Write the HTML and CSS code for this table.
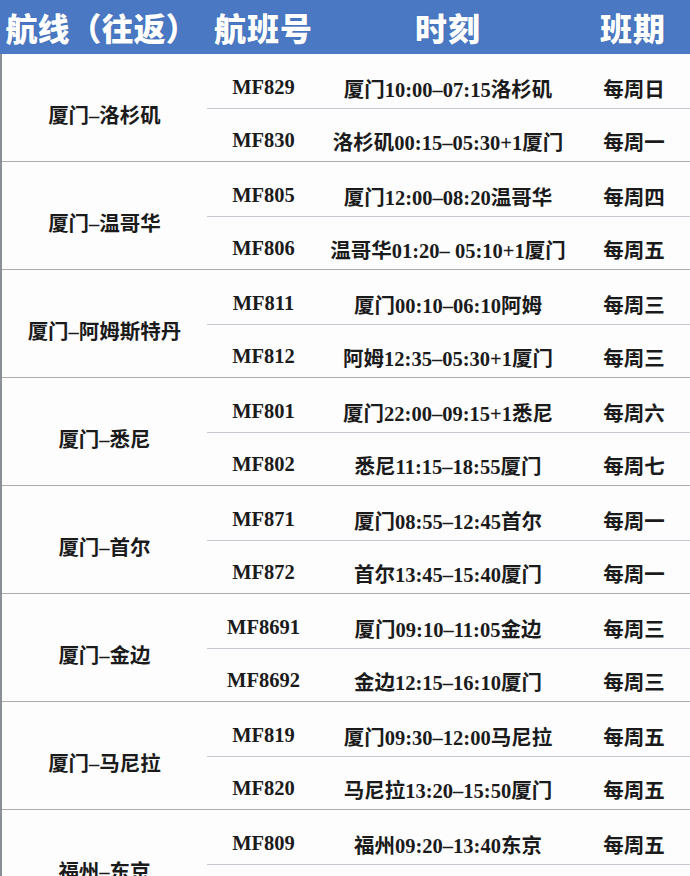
FILE: index.html
```html
<!DOCTYPE html>
<html lang="zh-CN">
<head>
<meta charset="utf-8">
<title>航线表</title>
<link rel="stylesheet" href="styles.css">
</head>
<body>
<div class="table">
  <div class="head">
    <div class="h h-route">航线（往返）</div>
    <div class="h">航班号</div>
    <div class="h">时刻</div>
    <div class="h">班期</div>
  </div>

  <div class="group">
    <div class="route">厦门–洛杉矶</div>
    <div class="c no">MF829</div><div class="c tm">厦门10:00–07:15洛杉矶</div><div class="c day">每周日</div>
    <div class="c no r2">MF830</div><div class="c tm r2">洛杉矶00:15–05:30+1厦门</div><div class="c day r2">每周一</div>
  </div>

  <div class="group">
    <div class="route">厦门–温哥华</div>
    <div class="c no">MF805</div><div class="c tm">厦门12:00–08:20温哥华</div><div class="c day">每周四</div>
    <div class="c no r2">MF806</div><div class="c tm r2">温哥华01:20– 05:10+1厦门</div><div class="c day r2">每周五</div>
  </div>

  <div class="group">
    <div class="route">厦门–阿姆斯特丹</div>
    <div class="c no">MF811</div><div class="c tm">厦门00:10–06:10阿姆</div><div class="c day">每周三</div>
    <div class="c no r2">MF812</div><div class="c tm r2">阿姆12:35–05:30+1厦门</div><div class="c day r2">每周三</div>
  </div>

  <div class="group">
    <div class="route">厦门–悉尼</div>
    <div class="c no">MF801</div><div class="c tm">厦门22:00–09:15+1悉尼</div><div class="c day">每周六</div>
    <div class="c no r2">MF802</div><div class="c tm r2">悉尼11:15–18:55厦门</div><div class="c day r2">每周七</div>
  </div>

  <div class="group">
    <div class="route">厦门–首尔</div>
    <div class="c no">MF871</div><div class="c tm">厦门08:55–12:45首尔</div><div class="c day">每周一</div>
    <div class="c no r2">MF872</div><div class="c tm r2">首尔13:45–15:40厦门</div><div class="c day r2">每周一</div>
  </div>

  <div class="group">
    <div class="route">厦门–金边</div>
    <div class="c no">MF8691</div><div class="c tm">厦门09:10–11:05金边</div><div class="c day">每周三</div>
    <div class="c no r2">MF8692</div><div class="c tm r2">金边12:15–16:10厦门</div><div class="c day r2">每周三</div>
  </div>

  <div class="group">
    <div class="route">厦门–马尼拉</div>
    <div class="c no">MF819</div><div class="c tm">厦门09:30–12:00马尼拉</div><div class="c day">每周五</div>
    <div class="c no r2">MF820</div><div class="c tm r2">马尼拉13:20–15:50厦门</div><div class="c day r2">每周五</div>
  </div>

  <div class="group">
    <div class="route">福州–东京</div>
    <div class="c no">MF809</div><div class="c tm">福州09:20–13:40东京</div><div class="c day">每周五</div>
    <div class="c no r2"></div><div class="c tm r2"></div><div class="c day r2"></div>
  </div>
</div>
</body>
</html>
```

FILE: styles.css
```css
html, body {
  margin: 0;
  padding: 0;
  background: #fdfdfe;
}
body {
  width: 690px;
  height: 876px;
  overflow: hidden;
}
.table {
  border-left: 2px solid #8a8f96;
  box-sizing: border-box;
  width: 690px;
}
.head {
  display: grid;
  grid-template-columns: 205px 113px 256px 114px;
  height: 54px;
  background: #4a78c3;
  align-items: center;
  margin-left: -2px;
  padding-left: 2px;
}
.h {
  text-align: center;
  color: #ffffff;
  font-family: "Noto Sans CJK SC", sans-serif;
  font-weight: 900;
  font-size: 32px;
  line-height: 50px;
  letter-spacing: 1px;
  text-shadow: 0 0 1px #2c5aa6;
}
.h-route {
  letter-spacing: 0;
  padding-right: 6px;
}
.group {
  display: grid;
  grid-template-columns: 205px 113px 256px 114px;
  grid-template-rows: 54px 53px;
  border-bottom: 1px solid #a9adb2;
  font-family: "Liberation Serif", "Noto Sans CJK SC", serif;
  font-weight: 700;
  font-size: 20.5px;
  color: #1b1b1b;
}
.route {
  grid-row: 1 / 3;
  grid-column: 1;
  display: flex;
  align-items: center;
  justify-content: center;
  font-size: 20.5px;
  padding-top: 12px;
}
.c {
  display: flex;
  align-items: center;
  justify-content: center;
  white-space: nowrap;
  padding-top: 13px;
}
.r2 {
  border-top: 1px solid #c3c8ce;
  padding-top: 11px;
}
.day {
  padding-left: 2px;
}
```
